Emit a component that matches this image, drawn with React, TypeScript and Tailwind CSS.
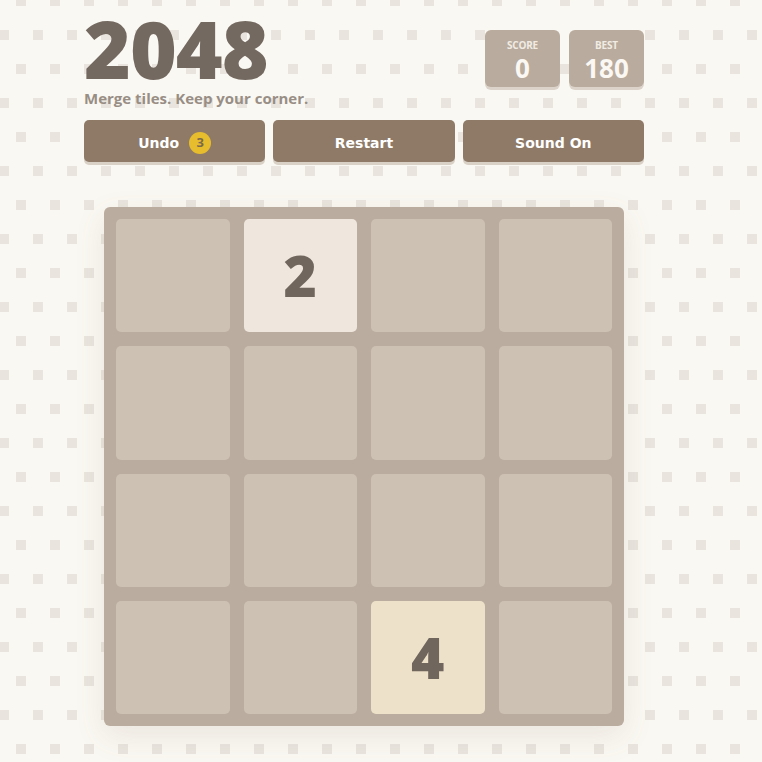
import React from "react";

const cells: (number | null)[] = [
  null, 2, null, null,
  null, null, null, null,
  null, null, null, null,
  null, null, 4, null,
];

function Tile({ value }: { value: number | null }) {
  if (value === 2) {
    return (
      <div className="flex items-center justify-center rounded-[5px] bg-[#efe6dd] text-[57px] font-extrabold leading-none text-[#70665e]">
        2
      </div>
    );
  }
  if (value === 4) {
    return (
      <div className="flex items-center justify-center rounded-[5px] bg-[#ede2c9] text-[57px] font-extrabold leading-none text-[#70665e]">
        4
      </div>
    );
  }
  return <div className="rounded-[5px] bg-[#cdc1b4]" />;
}

function ScoreBox({ label, value }: { label: string; value: string }) {
  return (
    <div className="flex h-[57px] w-[75px] flex-col items-center rounded-[6px] bg-[#b9ab9d] pt-[10px] shadow-[0_3px_0_#dcd4ca]">
      <div className="text-[10px] font-bold leading-[11px] tracking-[-0.2px] text-[#f1ebe3]">{label}</div>
      <div className="mt-[3px] text-[26px] font-bold leading-[28px] text-[#fbf8f4]">{value}</div>
    </div>
  );
}

function Btn({ children }: { children: React.ReactNode }) {
  return (
    <button className="flex h-[42px] flex-1 items-center justify-center gap-[10px] rounded-[5px] bg-[#8e7a67] pt-[4px] text-[14px] font-bold text-white shadow-[0_3px_0_#d9d0c6] [font-family:'DejaVu_Sans',sans-serif]">
      {children}
    </button>
  );
}

export default function App() {
  return (
    <div className="min-h-screen bg-[#faf8f2] [background-image:conic-gradient(from_270deg_at_10px_10px,#e9e5de_25%,transparent_0),conic-gradient(from_270deg_at_10px_10px,#e9e5de_25%,transparent_0)] [background-size:34px_68px] [background-position:-1px_30px,16px_64px] [font-family:'Open_Sans',sans-serif]">
      <div className="ml-[84px] w-[560px] pt-[6px]">
        <div className="flex items-start justify-between">
          <div>
            <h1 className="text-[80px] font-extrabold leading-[84px] tracking-[-1px] text-[#736960]">2048</h1>
            <p className="text-[15px] font-bold leading-[16px] text-[#988e85]">
              Merge tiles. Keep your corner.
            </p>
          </div>
          <div className="mt-[24px] flex gap-[9px]">
            <ScoreBox label="SCORE" value="0" />
            <ScoreBox label="BEST" value="180" />
          </div>
        </div>
        <div className="mt-[14px] flex gap-[8px]">
          <Btn>
            <span>Undo</span>
            <span className="flex h-[22px] w-[22px] items-center justify-center rounded-full bg-[#e7bd2d] text-[13px] font-bold text-[#7b6a4c] [font-family:'Open_Sans',sans-serif]">
              3
            </span>
          </Btn>
          <Btn>Restart</Btn>
          <Btn>Sound On</Btn>
        </div>
      </div>
      <div className="ml-[104px] mt-[45px] grid h-[519px] w-[520px] grid-cols-4 grid-rows-4 gap-[14px] rounded-[6px] bg-[#baac9f] p-[12px] shadow-[0_10px_30px_rgba(120,100,80,0.12)]">
        {cells.map((v, i) => (
          <Tile key={i} value={v} />
        ))}
      </div>
    </div>
  );
}
